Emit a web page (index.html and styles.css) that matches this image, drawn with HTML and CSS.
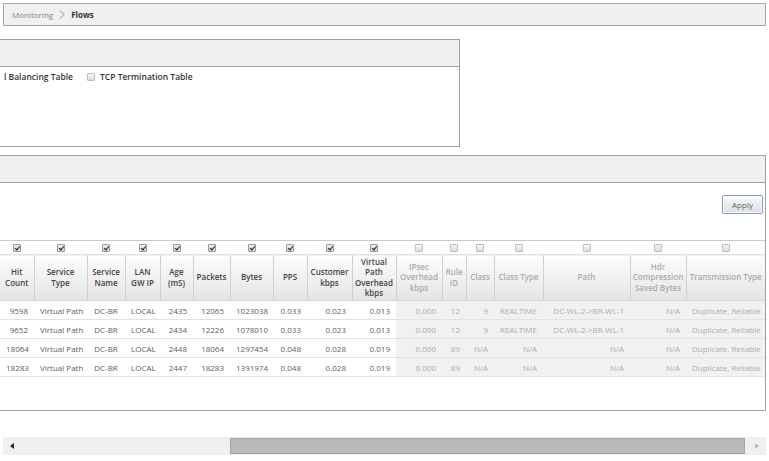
FILE: index.html
```html
<!DOCTYPE html>
<html>
<head>
<meta charset="utf-8">
<link rel="stylesheet" href="styles.css">
</head>
<body>
<div class="breadcrumb">
  <span class="crumb">Monitoring</span>
  <svg class="chev" width="6" height="9" viewBox="0 0 6 9"><path d="M1 0.5 L5 4.5 L1 8.5" fill="none" stroke="#8a8a8a" stroke-width="1"/></svg>
  <span class="crumb-current">Flows</span>
</div>

<div class="panel panel-options">
  <div class="panel-head"></div>
  <div class="panel-body options">
    <span class="opt">l Balancing Table</span>
    <span class="opt"><span class="cb"></span>TCP Termination Table</span>
  </div>
</div>

<div class="panel panel-table">
  <div class="panel-head"></div>
  <div class="toolbar"><button class="btn">Apply</button></div>
  <table class="grid">
    <colgroup>
      <col style="width:34px"><col style="width:53px"><col style="width:38px"><col style="width:35px"><col style="width:33px"><col style="width:37px"><col style="width:43px"><col style="width:34px"><col style="width:45px"><col style="width:44px"><col style="width:46px"><col style="width:24px"><col style="width:28px"><col style="width:49px"><col style="width:87px"><col style="width:56px"><col style="width:79px">
    </colgroup>
    <thead>
      <tr class="pick">
        <td><span class="cb on"></span></td><td><span class="cb on"></span></td><td><span class="cb on"></span></td><td><span class="cb on"></span></td><td><span class="cb on"></span></td><td><span class="cb on"></span></td><td><span class="cb on"></span></td><td><span class="cb on"></span></td><td><span class="cb on"></span></td><td><span class="cb on"></span></td><td><span class="cb"></span></td><td><span class="cb"></span></td><td><span class="cb"></span></td><td><span class="cb"></span></td><td><span class="cb"></span></td><td><span class="cb"></span></td><td><span class="cb"></span></td>
      </tr>
      <tr class="heads">
        <th>Hit<br>Count</th><th>Service<br>Type</th><th>Service<br>Name</th><th>LAN<br>GW IP</th><th>Age<br>(mS)</th><th>Packets</th><th>Bytes</th><th>PPS</th><th>Customer<br>kbps</th><th>Virtual<br>Path<br>Overhead<br>kbps</th>
        <th class="off">IPsec<br>Overhead<br>kbps</th><th class="off">Rule<br>ID</th><th class="off">Class</th><th class="off">Class Type</th><th class="off">Path</th><th class="off">Hdr<br>Compression<br>Saved Bytes</th><th class="off">Transmission Type</th>
      </tr>
    </thead>
    <tbody>
      <tr>
        <td class="r">9598</td><td class="c">Virtual Path</td><td class="c">DC-BR</td><td class="c">LOCAL</td><td class="r">2435</td><td class="r">12065</td><td class="r">1023038</td><td class="r">0.033</td><td class="r">0.023</td><td class="r">0.013</td>
        <td class="r off">0.000</td><td class="r off">12</td><td class="r off">9</td><td class="r off">REALTIME</td><td class="r off">DC-WL-2-&gt;BR-WL-1</td><td class="r off">N/A</td><td class="r off">Duplicate, Reliable</td>
      </tr>
      <tr>
        <td class="r">9652</td><td class="c">Virtual Path</td><td class="c">DC-BR</td><td class="c">LOCAL</td><td class="r">2434</td><td class="r">12226</td><td class="r">1078010</td><td class="r">0.033</td><td class="r">0.023</td><td class="r">0.013</td>
        <td class="r off">0.000</td><td class="r off">12</td><td class="r off">9</td><td class="r off">REALTIME</td><td class="r off">DC-WL-2-&gt;BR-WL-1</td><td class="r off">N/A</td><td class="r off">Duplicate, Reliable</td>
      </tr>
      <tr>
        <td class="r">18064</td><td class="c">Virtual Path</td><td class="c">DC-BR</td><td class="c">LOCAL</td><td class="r">2448</td><td class="r">18064</td><td class="r">1297454</td><td class="r">0.048</td><td class="r">0.028</td><td class="r">0.019</td>
        <td class="r off">0.000</td><td class="r off">89</td><td class="r off">N/A</td><td class="r off">N/A</td><td class="r off">N/A</td><td class="r off">N/A</td><td class="r off">Duplicate, Reliable</td>
      </tr>
      <tr>
        <td class="r">18283</td><td class="c">Virtual Path</td><td class="c">DC-BR</td><td class="c">LOCAL</td><td class="r">2447</td><td class="r">18283</td><td class="r">1391974</td><td class="r">0.048</td><td class="r">0.028</td><td class="r">0.019</td>
        <td class="r off">0.000</td><td class="r off">89</td><td class="r off">N/A</td><td class="r off">N/A</td><td class="r off">N/A</td><td class="r off">N/A</td><td class="r off">Duplicate, Reliable</td>
      </tr>
    </tbody>
  </table>
</div>

<div class="hscroll">
  <span class="arrow arrow-left"></span>
  <div class="track"><div class="thumb"></div></div>
  <span class="arrow arrow-right"></span>
</div>
</body>
</html>
```

FILE: styles.css
```css
* { box-sizing: border-box; }
html, body { margin: 0; padding: 0; background: #fff; }
body {
  width: 769px;
  overflow: hidden;
  font-family: "Open Sans", "Liberation Sans", sans-serif;
  font-size: 8px;
  color: #555;
}

.breadcrumb {
  margin: 3px 3px 0 3px;
  height: 23px;
  border: 1px solid #a6a6a6;
  background: #f0f0f0;
  display: flex;
  align-items: center;
  gap: 5px;
  padding-left: 8px;
  font-size: 8px;
}
.crumb { color: #858585; }
.chev { display: block; margin: 0 1px; }
.crumb-current { color: #333; font-weight: 700; }

.panel {
  border: 1px solid #a0a0a0;
  margin-left: -1px;
  background: #fff;
}
.panel-head {
  background: #f0f0f0;
  border-bottom: 1px solid #a0a0a0;
  height: 27px;
}
.panel-options {
  margin-top: 13px;
  width: 461px;
  height: 108px;
}
.options {
  display: flex;
  gap: 14px;
  padding: 4px 0 0 4px;
  font-size: 8.5px;
  font-weight: 600;
  color: #333;
  line-height: 12px;
}
.opt { display: flex; align-items: center; gap: 5px; }

.panel-table {
  margin-top: 8px;
  width: 767px;
  height: 256px;
}
.toolbar {
  display: flex;
  justify-content: flex-end;
  padding: 12px 2px 0 0;
  height: 57px;
}
.btn {
  width: 41px;
  height: 19px;
  padding: 0;
  border: 1px solid #7c9bc4;
  border-radius: 2px;
  background: linear-gradient(#fafafa, #dedede);
  box-shadow: inset 0 0 0 1px #fff;
  font-family: inherit;
  font-size: 8px;
  color: #666;
}

.cb {
  display: inline-block;
  width: 8px;
  height: 8px;
  border: 1px solid #bdbdbd;
  border-radius: 1px;
  background: linear-gradient(#f7f7f7, #dcdcdc);
  vertical-align: middle;
  position: relative;
}
.cb.on {
  border-color: #9a9a9a;
  background: linear-gradient(#f0f0f0, #cfcfcf);
}
.cb.on::after {
  content: "";
  position: absolute;
  left: 2px;
  top: 0px;
  width: 2px;
  height: 4px;
  border: solid #222;
  border-width: 0 1.3px 1.3px 0;
  transform: rotate(40deg);
}

.grid {
  width: 765px;
  table-layout: fixed;
  border-collapse: collapse;
  border-top: 1px solid #c8c8c8;
}
.grid td, .grid th { padding: 0 6px; overflow: hidden; white-space: nowrap; }
.pick td {
  height: 14px;
  text-align: center;
  line-height: 8px;
  padding: 0;
}
.heads th {
  height: 46px;
  font-weight: 600;
  color: #444;
  line-height: 10.5px;
  text-align: center;
  padding: 0 1px;
  background: linear-gradient(#fdfdfd, #e4e4e4);
  border-left: 1px solid #d0d0d0;
  border-top: 1px solid #e2e2e2;
  border-bottom: 1px solid #d6d6d6;
}
.heads th:first-child { border-left: none; }
.heads th.off { color: #ababab; }
tbody td {
  height: 19px;
  color: #5e5e5e;
  border-bottom: 1px solid #e2e2e2;
}
tbody td.off { background: #f1f1f1; color: #adadad; }
td.r { text-align: right; }
td.c { text-align: center; }

.hscroll {
  margin: 26px 3px 0 3px;
  height: 18px;
  background: #f0f0f0;
  display: flex;
  align-items: center;
}
.arrow {
  width: 0;
  height: 0;
  border-top: 3.5px solid transparent;
  border-bottom: 3.5px solid transparent;
}
.arrow-left { border-right: 4px solid #222; margin: 0 6px 0 7px; }
.arrow-right { border-left: 4px solid #bcbcbc; margin: 0 7px 0 10px; }
.track { flex: 1; height: 16px; padding-left: 210px; }
.thumb {
  height: 16px;
  background: #b9b9b9;
  border: 1px solid #a5a5a5;
}
```
